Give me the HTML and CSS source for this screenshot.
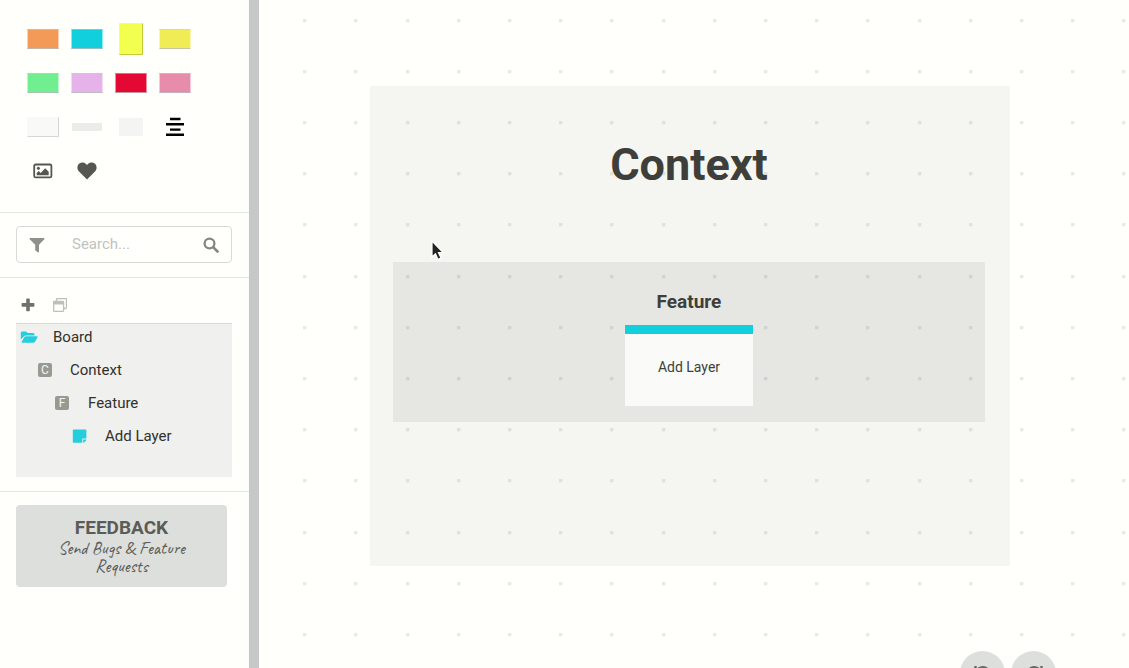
FILE: index.html
```
<!DOCTYPE html>
<html lang="en">
<head>
<meta charset="utf-8">
<meta name="viewport" content="width=device-width, initial-scale=1">
<title>Board</title>
<link rel="stylesheet" href="styles.css">
</head>
<body>
<div class="app">
  <aside class="sidebar">
    <section class="palette" aria-label="Palette">
      <button class="tool" aria-label="Orange note"><span class="swatch orange"></span></button>
      <button class="tool" aria-label="Cyan note"><span class="swatch cyan"></span></button>
      <button class="tool" aria-label="Tall yellow note"><span class="swatch tall"></span></button>
      <button class="tool" aria-label="Yellow note"><span class="swatch yellow"></span></button>
      <button class="tool" aria-label="Green note"><span class="swatch green"></span></button>
      <button class="tool" aria-label="Lilac note"><span class="swatch lilac"></span></button>
      <button class="tool" aria-label="Red note"><span class="swatch red"></span></button>
      <button class="tool" aria-label="Pink note"><span class="swatch pink"></span></button>
      <button class="tool" aria-label="White note"><span class="swatch white"></span></button>
      <button class="tool" aria-label="Feature area"><span class="swatch strip"></span></button>
      <button class="tool" aria-label="Context area"><span class="swatch area"></span></button>
      <button class="tool" aria-label="Text"><svg width="20" height="20" viewBox="0 0 20 20"><path d="M5 .8h10.500v2.400H5zM1 6h18v2.400H1zM5 11.400h10.500v2.400H5zM1 16.600h18V19H1z"/></svg></button>
      <button class="tool" aria-label="Image"><svg width="20" height="16" viewBox="0 0 20 16"><rect x="1.200" y="1.500" width="17.200" height="12.800" rx="1.400" fill="none" stroke="#555650" stroke-width="1.800"/><circle cx="5.400" cy="5.300" r="1.500" fill="#555650"/><path fill="#555650" d="M3.700 12.200V10l2-2 2 2 4.500-4.800 3.500 3.500v3.500z"/></svg></button>
      <button class="tool" aria-label="Icon"><svg width="20" height="18" viewBox="0 0 20 18"><path fill="#555650" d="M10 17.500 1.800 9.200C-.3 7 .1 3.400 2.300 1.600 4.500-.1 7.500.3 9.300 2.200l.7.8.7-.8c1.800-1.900 4.800-2.300 7-.6 2.200 1.800 2.600 5.400.5 7.600z"/></svg></button>
    </section>

    <section class="search-section">
      <form class="search">
        <button class="search-button" type="button" aria-label="Filter"><svg width="16" height="16" viewBox="0 0 16 16"><path fill="#8f908b" d="M1.200 1h13.600c.7 0 1 .8.500 1.300L10 7.800v6.900c0 .7-.7 1-1.200.6l-2.100-1.600c-.3-.2-.5-.5-.5-.8V7.800L.7 2.300C.2 1.800.5 1 1.200 1z"/></svg></button>
        <input class="search-input" type="text" placeholder="Search..." aria-label="Search">
        <button class="search-button" type="submit" aria-label="Search"><svg width="16" height="16" viewBox="0 0 16 16"><circle cx="6.500" cy="6.500" r="4.900" fill="none" stroke="#858681" stroke-width="2.300"/><path d="m10.200 10.200 4.300 4.300" stroke="#858681" stroke-width="2.600" stroke-linecap="round"/></svg></button>
      </form>
    </section>

    <section class="outline">
      <div class="outline-tools">
        <button class="plain" aria-label="Add"><svg width="14" height="14" viewBox="0 0 14 14"><path fill="#70716c" d="M5.200 1.200q0-.7.700-.7h2.200q.7 0 .7.700v3.900h3.900q.7 0 .7.700v2.200q0 .7-.7.700H8.800v3.900q0 .7-.7.700H5.900q-.7 0-.7-.7V8.700H1.300q-.7 0-.7-.7V5.800q0-.7.700-.7h3.900z"/></svg></button>
        <button class="plain" aria-label="Collapse layers"><svg width="14" height="14" viewBox="0 0 14 14"><path d="M3.500 3V1.500q0-1 1-1h8q1 0 1 1v8q0 1-1 1H11" fill="none" stroke="#bebfbb" stroke-width="1.300"/><rect x=".6" y="3.500" width="10" height="9.900" rx="1" fill="none" stroke="#bebfbb" stroke-width="1.300"/><path d="M0 3h11v3.500H0z" fill="#bebfbb"/></svg></button>
      </div>
      <ul class="tree">
        <li><button class="node"><svg width="18" height="18" viewBox="0 0 18 18"><path fill="#25cedd" d="M.8 11.500V4.800q0-1.300 1.300-1.300h4l1.700 1.600h5.300q1.300 0 1.300 1.300v1H6.100q-1.700 0-2.500 1.400z"/><path fill="#25cedd" d="M6 8.200h11q1 0 .5 1l-2.400 4.500q-.6 1-1.700 1H2.300q-1.200 0-.6-1l2.500-4.500Q4.800 8.200 6 8.200z"/></svg><span>Board</span></button></li>
        <li class="level-1"><button class="node"><span class="badge">C</span><span>Context</span></button></li>
        <li class="level-2"><button class="node"><span class="badge">F</span><span>Feature</span></button></li>
        <li class="level-3"><button class="node"><svg width="18" height="18" viewBox="0 0 18 18"><path fill="#25cedd" d="M1.600 2.500h12q.8 0 .8.800v8.200h-3.300q-.9 0-.9.900v3.400H1.600q-.8 0-.8-.8V3.300q0-.8.8-.8z"/><path fill="#25cedd" d="M11.100 15.800v-3.400h3.300q0 .7-.4 1.100l-1.900 1.900q-.4.400-1 .4z"/></svg><span>Add Layer</span></button></li>
      </ul>
    </section>

    <section class="feedback-section">
      <button class="feedback"><strong>FEEDBACK</strong><span class="note">Send Bugs &amp; Feature Requests</span></button>
    </section>
  </aside>

  <div class="splitter"></div>

  <main class="canvas">
    <svg class="grid" aria-hidden="true">
      <defs>
        <g id="dot"><path d="M0 0h4v3h-1v1h-3z" opacity=".4"/><path d="M0 0h3v3h-3z"/></g>
        <g id="row">
          <use href="#dot" x="44"/><use href="#dot" x="95"/><use href="#dot" x="147"/><use href="#dot" x="198"/><use href="#dot" x="249"/>
        </g>
        <pattern id="dots" width="256" height="256" patternUnits="userSpaceOnUse">
          <use href="#row" y="19"/><use href="#row" y="70"/><use href="#row" y="121"/><use href="#row" y="172"/><use href="#row" y="223"/>
        </pattern>
      </defs>
      <rect width="100%" height="100%" fill="url(#dots)"/>
    </svg>
    <article class="context">
      <h1>Context</h1>
      <section class="feature">
        <h2>Feature</h2>
        <div class="card"><p>Add Layer</p></div>
      </section>
    </article>
    <svg class="pointer" width="16" height="24" viewBox="0 0 16 24" aria-hidden="true"><path d="M2 2v16l3.500-3.200 2.500 5.600 3-1.300-2.500-5.400h4.600z" fill="#222" stroke="#fff" stroke-width="1.200"/></svg>
    <div class="history">
      <button class="round" aria-label="Undo"><svg width="18" height="18" viewBox="0 0 18 18"><path d="M1.500 1v6h6M2.500 6a7.200 7.200 0 1 1 0 7" fill="none" stroke="#666762" stroke-width="2.400"/></svg></button>
      <button class="round" aria-label="Redo"><svg width="18" height="18" viewBox="0 0 18 18"><path d="M16.500 1v6h-6M15.500 6a7.200 7.200 0 1 0 0 7" fill="none" stroke="#666762" stroke-width="2.400"/></svg></button>
    </div>
  </main>
</div>
</body>
</html>
```
FILE: styles.css
```
* { box-sizing: border-box; }

body {
  margin: 0;
  background: #fffffc;
  color: #3e3e3a;
  font-family: Roboto, "Liberation Sans", sans-serif;
  font-size: 15px;
}

button {
  border: 0;
  padding: 0;
  background: none;
  color: inherit;
  font: inherit;
  cursor: pointer;
}

svg { display: block; }

.app { display: flex; height: 100vh; overflow: hidden; }

.sidebar { flex: 0 0 249px; min-width: 0; }

.splitter { flex: 0 0 10px; background: #c6c7c8; }

.palette {
  display: grid;
  grid-template-columns: repeat(4, 44px);
  grid-auto-rows: 44px;
  padding: 17px 21px 19px;
}

.tool { display: grid; place-items: center; }

.swatch {
  width: 32px;
  height: 20px;
  border: 1px solid;
  border-color: #ccc8 #fff8 #bbbc;
}

.orange { background: #f39a58; }
.cyan { background: #11cfdd; }
.yellow { background: #f0ec55; }
.green { background: #70ee90; }
.lilac { background: #e5b2ea; }
.red { background: #e40834; }
.pink { background: #e78dab; }
.tall { width: 24px; height: 32px; border-color: #fff4 #0003 #0003 #fff4; background: #f3ff4e; }
.white { border-color: #fff0 #0002 #0002 #fff0; background: #f9faf7; }
.strip { width: 30px; height: 8px; border: 0; background: #ebece9; }
.area { width: 24px; height: 18px; border: 0; background: #f4f5f2; }

.search-section {
  padding: 13px 17px 14px 16px;
  border-top: 1px solid #e3e5e2;
  border-bottom: 1px solid #e3e5e2;
}

.search {
  display: flex;
  height: 37px;
  border: 1px solid #d8dad7;
  border-radius: 4px;
}

.search-button { display: grid; flex: 0 0 40px; place-items: center; }

.search-input {
  flex: 1;
  min-width: 0;
  border: 0;
  padding: 0 0 2px 15px;
  background: none;
  outline: 0;
  color: inherit;
  font: inherit;
}

.search-input::placeholder { color: #c1c2be; opacity: 1; }

.outline {
  padding: 0 17px 14px 16px;
  border-bottom: 1px solid #e3e5e2;
}

.outline-tools { display: flex; align-items: end; gap: 18px; padding: 20px 5px 11px; }

.tree {
  margin: 0;
  padding: 0 0 21px 4px;
  border-top: 1px solid #d8dad7;
  background: #f0f1ee;
  list-style: none;
}

.tree li { padding-bottom: 7px; }
.tree .level-1 { padding-left: 17px; }
.tree .level-2 { padding-left: 35px; }
.tree .level-3 { padding-left: 52px; }

.node {
  display: flex;
  align-items: center;
  gap: 15px;
  height: 26px;
  color: #30302d;
}

.badge {
  width: 14px;
  height: 14px;
  margin: 0 4px 0 0;
  border-radius: 2px;
  background: #989993;
  color: #f4f5f2;
  font-size: 12px;
  line-height: 15px;
  text-align: center;
}

.level-1 .badge { margin: 0 3px 0 1px; }

.feedback-section { padding: 13px 22px 13px 16px; }

.feedback {
  display: block;
  width: 100%;
  padding: 12px 24px;
  border-radius: 4px;
  background: #dddfdd;
  color: #5b5c58;
  text-align: center;
}

.feedback strong { display: block; font-size: 19px; line-height: 22px; }
.feedback .note { display: block; font: 18px/18px Caveat, Lato, cursive; }

.canvas { position: relative; flex: 1; min-width: 0; overflow: hidden; }

.grid {
  position: absolute;
  inset: 0;
  width: 100%;
  height: 100%;
  fill: #e9eae7;
}

/* Board items sit on a free canvas. */
.context {
  position: absolute;
  top: 86px;
  left: 111px;
  width: 640px;
  padding: 49px 25px 144px 23px;
  background: rgb(5 25 0 / 4%);
  text-align: center;
}

.context h1 { margin: 0 0 67px; font-size: 45px; line-height: 60px; }

.feature { padding: 28px 24px 16px; background: rgb(0 5 0 / 6%); }
.feature h2 { margin: 0 0 11px; font-size: 19px; line-height: 24px; }

.card {
  width: 128px;
  height: 81px;
  margin: 0 auto;
  padding-top: 24px;
  border-top: 9px solid #11cfdd;
  background: #fafbf8;
}

.card p { margin: 0; font-size: 14px; line-height: 18px; }

.pointer { position: absolute; top: 239px; left: 171px; }

.history {
  position: absolute;
  right: 73px;
  bottom: -28px;
  display: flex;
  gap: 6px;
}

.round {
  display: grid;
  place-items: center;
  width: 45px;
  height: 45px;
  border-radius: 50%;
  background: #dddfdd;
}
```
